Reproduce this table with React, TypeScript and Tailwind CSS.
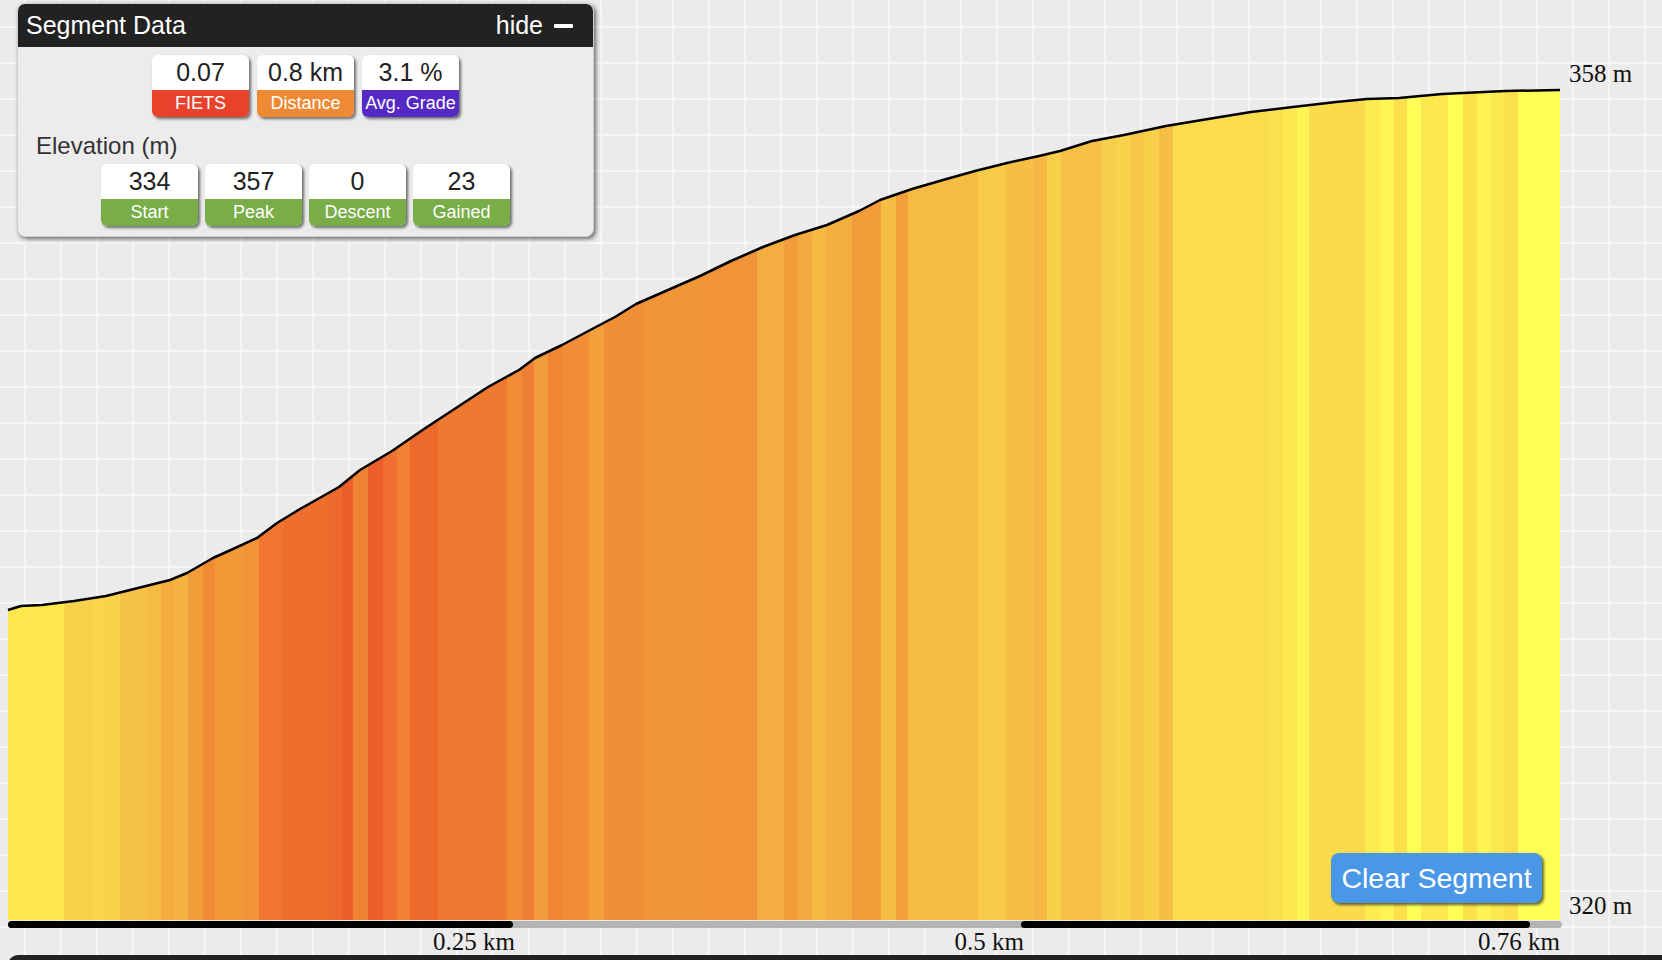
import React from "react";

const profile: [number, number][] = [
  [8, 610], [21, 606], [42, 605], [74, 601], [106, 596], [138, 588], [170, 580],
  [187, 573], [213, 558], [233, 549], [257, 538], [277, 523], [300, 509], [339, 487],
  [360, 470], [392, 451], [424, 429], [456, 408], [488, 387], [519, 370], [535, 358],
  [562, 345], [594, 328], [615, 317], [636, 304], [668, 290], [700, 276], [731, 261],
  [763, 247], [795, 235], [827, 225], [859, 211], [880, 200], [912, 189], [943, 180],
  [975, 171], [1007, 163], [1039, 156], [1060, 151], [1092, 141], [1124, 135],
  [1166, 126], [1208, 119], [1251, 112], [1293, 107], [1336, 102], [1367, 99],
  [1399, 98], [1442, 94], [1484, 92], [1505, 91], [1560, 90],
];

// end x and colour of each grade stripe
const stripes: [number, string][] = [
  [64, "#fde74c"], [91, "#f9d24b"], [105, "#f9d54c"], [120, "#f8d24a"], [147, "#f6c246"],
  [161, "#f5bc44"], [174, "#f4ac3f"], [188, "#f5b442"], [203, "#f19d39"], [215, "#f08b35"],
  [244, "#f29938"], [259, "#f19436"], [283, "#f07630"], [327, "#ee6e2e"], [342, "#ed692c"],
  [353, "#eb5f2a"], [368, "#ef8333"], [383, "#ec5f2a"], [397, "#ef7030"], [410, "#f08033"],
  [438, "#ed692c"], [507, "#ef7931"], [522, "#f18c35"], [534, "#ef7f33"], [548, "#f19c3a"],
  [563, "#f08633"], [589, "#f18d36"], [604, "#f2a03c"], [645, "#f18f36"], [700, "#f19638"],
  [757, "#f09437"], [784, "#f3ad40"], [798, "#f29c3a"], [812, "#f3aa3e"], [826, "#f5b942"],
  [852, "#f3ae40"], [881, "#f29d3a"], [896, "#f6bd44"], [908, "#f29f3b"], [978, "#f5bc44"],
  [1006, "#f7ca47"], [1034, "#f5be45"], [1047, "#f5b844"], [1061, "#f8d04a"], [1102, "#f6c146"],
  [1117, "#f8cf4a"], [1130, "#f8d34b"], [1144, "#f6c846"], [1159, "#f8d04a"], [1173, "#f5be45"],
  [1268, "#fadc4d"], [1283, "#fbe04e"], [1297, "#fde84f"], [1309, "#fef452"], [1365, "#fadb4c"],
  [1380, "#fdec4f"], [1394, "#fef452"], [1407, "#fbe04c"], [1421, "#ffff55"], [1448, "#fde94f"],
  [1463, "#ffff55"], [1477, "#fbe04b"], [1491, "#fef352"], [1504, "#fce84f"], [1518, "#fbe04b"],
  [1560, "#ffff55"],
];

function Profile() {
  const top = profile.map(([x, y]) => `${x},${y}`).join(" L");
  const area = `M8,920 L${top} L1560,920 Z`;
  let prev = 8;
  return (
    <svg width={1560} height={920} viewBox="0 0 1560 920" className="block shrink-0">
      <defs>
        <clipPath id="elev">
          <path d={area} />
        </clipPath>
      </defs>
      <g clipPath="url(#elev)">
        {stripes.map(([end, color]) => {
          const r = <rect key={end} x={prev} y={0} width={end - prev + 0.5} height={920} fill={color} />;
          prev = end;
          return r;
        })}
      </g>
      <polyline
        points={profile.map(([x, y]) => `${x},${y}`).join(" ")}
        fill="none"
        stroke="#000"
        strokeWidth={2.5}
        strokeLinejoin="round"
      />
    </svg>
  );
}

const Badge = ({ value, label, color }: { value: string; label: string; color: string }) => (
  <div className="w-[97px] overflow-hidden rounded-[6px] shadow-[2px_2px_3px_rgba(0,0,0,0.55)]">
    <div className="flex h-[35px] items-center justify-center bg-white text-[25px] text-[#222]">{value}</div>
    <div className={`flex h-[27px] items-center justify-center text-[18px] text-white ${color}`}>{label}</div>
  </div>
);

export default function App() {
  return (
    <div className="relative h-[960px] w-[1662px] overflow-hidden bg-[#ebebeb] bg-[linear-gradient(to_right,#f6f6f6_2px,transparent_2px),linear-gradient(to_bottom,#f6f6f6_2px,transparent_2px)] bg-[length:36px_36px] bg-[position:24px_26px] font-['Liberation_Sans',Arial,sans-serif]">
      <div className="flex h-[920px]">
        <Profile />
        <div className="flex w-[102px] flex-col justify-between pb-[2px] pl-[9px] pt-[61px] font-['Liberation_Serif','Times_New_Roman',serif] text-[25px] leading-none text-[#111]">
          <span>358 m</span>
          <span>320 m</span>
        </div>
      </div>

      <div className="ml-[8px] mt-[1px] flex h-[7px] w-[1554px] rounded-full bg-[#b4b4b4]">
        <div className="w-[505px] rounded-full bg-black" />
        <div className="w-[508px]" />
        <div className="w-[509px] rounded-full bg-black" />
      </div>

      <div className="flex h-[27px] pt-[1px] font-['Liberation_Serif','Times_New_Roman',serif] text-[25px] leading-none text-[#111]">
        <div className="w-[515px] text-right">0.25 km</div>
        <div className="w-[509px] text-right">0.5 km</div>
        <div className="w-[536px] text-right">0.76 km</div>
      </div>

      <div className="ml-[8px] h-[12px] rounded-tl-[10px] bg-[#222]" />

      {/* floating stats panel */}
      <div className="absolute left-[17px] top-[3px] h-[234px] w-[577px] rounded-[8px] border border-[#cfcfcf] bg-[#ececec] shadow-[2px_2px_4px_rgba(0,0,0,0.55)]">
        <div className="flex h-[43px] items-center justify-between rounded-t-[7px] bg-[#222] pl-[8px] pr-[20px] text-[25px] text-white">
          <span>Segment Data</span>
          <span className="flex items-center gap-[11px]">
            hide
            <span className="h-[4px] w-[19px] rounded-[1px] bg-white" />
          </span>
        </div>
        <div className="flex flex-col items-center pt-[8px]">
          <div className="flex gap-[8px]">
            <Badge value="0.07" label="FIETS" color="bg-[#e8422d]" />
            <Badge value="0.8 km" label="Distance" color="bg-[#ee8a35]" />
            <Badge value="3.1 %" label="Avg. Grade" color="bg-[#5429c4]" />
          </div>
          <div className="ml-[18px] mt-[15px] self-start text-[24px] leading-[28px] text-[#333]">Elevation (m)</div>
          <div className="mt-[4px] flex gap-[7px]">
            <Badge value="334" label="Start" color="bg-[#78ad47]" />
            <Badge value="357" label="Peak" color="bg-[#78ad47]" />
            <Badge value="0" label="Descent" color="bg-[#78ad47]" />
            <Badge value="23" label="Gained" color="bg-[#78ad47]" />
          </div>
        </div>
      </div>

      <button className="absolute left-[1331px] top-[853px] flex h-[50px] w-[211px] items-center justify-center rounded-[8px] bg-[#4a97e8] text-[28.5px] text-white shadow-[2px_2px_3px_rgba(0,0,0,0.6)]">
        Clear Segment
      </button>
    </div>
  );
}
